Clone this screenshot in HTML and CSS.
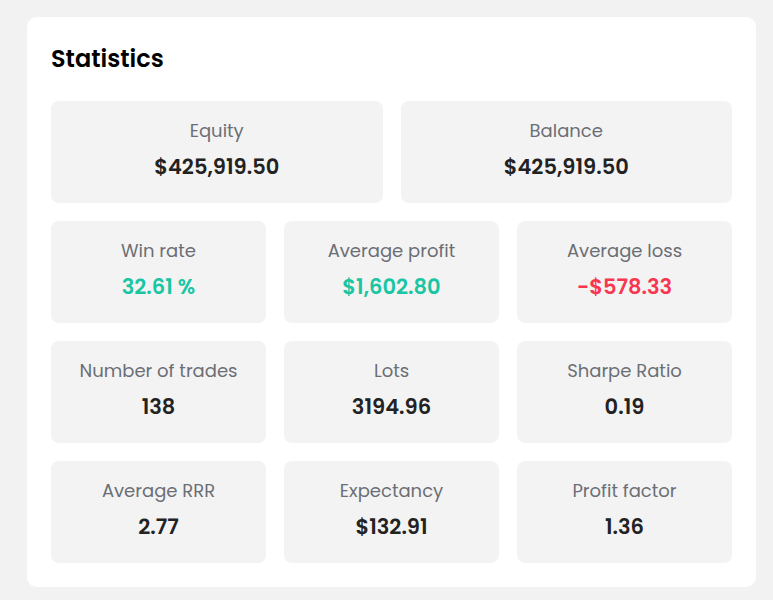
FILE: index.html
```html
<!DOCTYPE html>
<html lang="en">
<head>
    <meta charset="UTF-8">
    <meta name="viewport" content="width=device-width, initial-scale=1.0">
    <title>Statistics</title>
    <link rel="stylesheet" href="styles.css">
</head>
<body>
    <div class="card">
        <h2 class="cardTitle">Statistics</h2>

        <div class="statsRow two">
            <div class="statBox">
                <div class="statLabel">Equity</div>
                <div class="statValue">$425,919.50</div>
            </div>
            <div class="statBox">
                <div class="statLabel">Balance</div>
                <div class="statValue">$425,919.50</div>
            </div>
        </div>

        <div class="statsRow three">
            <div class="statBox">
                <div class="statLabel">Win rate</div>
                <div class="statValue positive">32.61 %</div>
            </div>
            <div class="statBox">
                <div class="statLabel">Average profit</div>
                <div class="statValue positive">$1,602.80</div>
            </div>
            <div class="statBox">
                <div class="statLabel">Average loss</div>
                <div class="statValue negative">-$578.33</div>
            </div>
        </div>

        <div class="statsRow three">
            <div class="statBox">
                <div class="statLabel">Number of trades</div>
                <div class="statValue">138</div>
            </div>
            <div class="statBox">
                <div class="statLabel">Lots</div>
                <div class="statValue">3194.96</div>
            </div>
            <div class="statBox">
                <div class="statLabel">Sharpe Ratio</div>
                <div class="statValue">0.19</div>
            </div>
        </div>

        <div class="statsRow three">
            <div class="statBox">
                <div class="statLabel">Average RRR</div>
                <div class="statValue">2.77</div>
            </div>
            <div class="statBox">
                <div class="statLabel">Expectancy</div>
                <div class="statValue">$132.91</div>
            </div>
            <div class="statBox">
                <div class="statLabel">Profit factor</div>
                <div class="statValue">1.36</div>
            </div>
        </div>
    </div>
</body>
</html>
```

FILE: styles.css
```css
body {
    margin: 0;
    padding: 17px 17px 13px 27px;
    background-color: #f2f2f2;
    font-family: Poppins, "Open Sans", "Noto Sans", sans-serif;
}

.card {
    background-color: #fff;
    border-radius: 10px;
    padding: 24px;
    display: flex;
    flex-direction: column;
    gap: 18px;
}

.cardTitle {
    margin: 0 0 6px 0;
    font-size: 24px;
    font-weight: 600;
    line-height: 36px;
    color: #000;
}

.statsRow {
    display: grid;
    gap: 18px;
}

.statsRow.two {
    grid-template-columns: 1fr 1fr;
}

.statsRow.three {
    grid-template-columns: 1fr 1fr 1fr;
}

.statBox {
    background-color: #f3f3f3;
    border-radius: 8px;
    height: 102px;
    box-sizing: border-box;
    padding-top: 17px;
    text-align: center;
}

.statLabel {
    font-size: 18px;
    line-height: 26px;
    color: #6b6e75;
}

.statValue {
    margin-top: 10px;
    font-size: 21px;
    font-weight: 600;
    line-height: 26px;
    color: #222;
}

.positive {
    color: #19c5a3;
}

.negative {
    color: #f8364f;
}
```
